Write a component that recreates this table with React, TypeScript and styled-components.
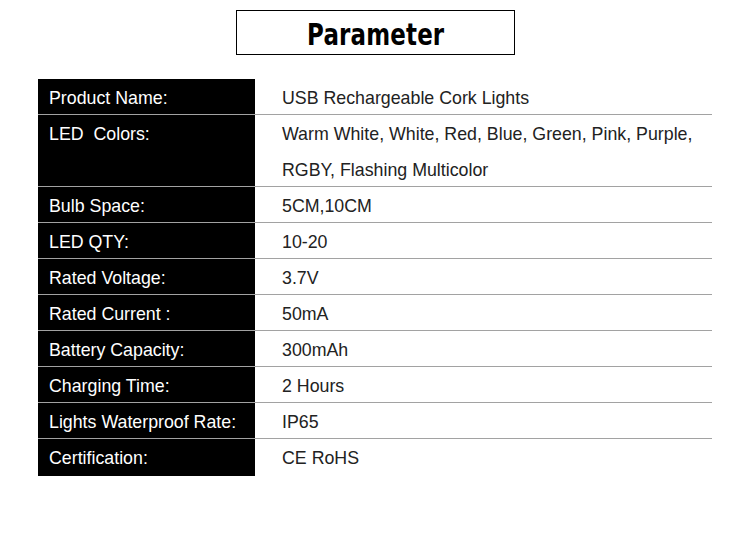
import React from 'react'
import styled, { createGlobalStyle } from 'styled-components'

const GlobalStyle = createGlobalStyle`
  html, body {
    margin: 0;
    padding: 0;
    background: #fff;
  }
  body {
    font-family: "Liberation Sans", Arial, sans-serif;
  }
`

interface Param {
  name: string
  value: string[]
}

const params: Param[] = [
  { name: 'Product Name:', value: ['USB Rechargeable Cork Lights'] },
  { name: 'LED\u00a0 Colors:', value: ['Warm White, White, Red, Blue, Green, Pink, Purple,', 'RGBY, Flashing Multicolor'] },
  { name: 'Bulb Space:', value: ['5CM,10CM'] },
  { name: 'LED QTY:', value: ['10-20'] },
  { name: 'Rated Voltage:', value: ['3.7V'] },
  { name: 'Rated Current :', value: ['50mA'] },
  { name: 'Battery Capacity:', value: ['300mAh'] },
  { name: 'Charging Time:', value: ['2 Hours'] },
  { name: 'Lights Waterproof Rate:', value: ['IP65'] },
  { name: 'Certification:', value: ['CE RoHS'] },
]

const App: React.FC = () => {
  return (
    <Page>
      <GlobalStyle />
      <TitleBox>
        <Title>Parameter</Title>
      </TitleBox>
      <Table>
        {params.map((p, i) => (
          <Row key={p.name} last={i === params.length - 1}>
            <Name>{p.name}</Name>
            <Value>
              {p.value.map(line => (
                <Line key={line}>{line}</Line>
              ))}
            </Value>
          </Row>
        ))}
      </Table>
    </Page>
  )
}

const Page = styled.div`
  width: 750px;
  height: 534px;
  padding-top: 10px;
  box-sizing: border-box;
`

const TitleBox = styled.div`
  width: 277px;
  height: 43px;
  margin: 0 0 0 236px;
  border: 1px solid #000;
  display: flex;
  align-items: center;
  justify-content: center;
`

const Title = styled.h1`
  margin: 4px 0 0;
  font-family: "DejaVu Sans Condensed", "DejaVu Sans", sans-serif;
  font-stretch: condensed;
  font-weight: bold;
  font-size: 30px;
  letter-spacing: 0.2px;
  color: #000;
  line-height: 1;
  transform: scaleX(0.85);
`

const Table = styled.div`
  margin: 24px 0 0 38px;
  width: 674px;
  display: flex;
  flex-direction: column;
`

const Row = styled.div<{ last: boolean }>`
  display: grid;
  grid-template-columns: 217px 1fr;
  min-height: ${p => (p.last ? '37px' : '35px')};
  border-bottom: ${p => (p.last ? 'none' : '1px solid #a2a2a2')};
`

const Name = styled.div`
  background: #000;
  color: #fff;
  font-size: 17.8px;
  line-height: 32px;
  padding: 3px 0 0 11px;
  white-space: nowrap;
`

const Value = styled.div`
  display: flex;
  flex-direction: column;
  gap: 1px;
  color: #222;
  font-size: 17.8px;
  padding-left: 27px;
  white-space: nowrap;
`

const Line = styled.div`
  line-height: 32px;
  padding-top: 3px;
`

export default App
